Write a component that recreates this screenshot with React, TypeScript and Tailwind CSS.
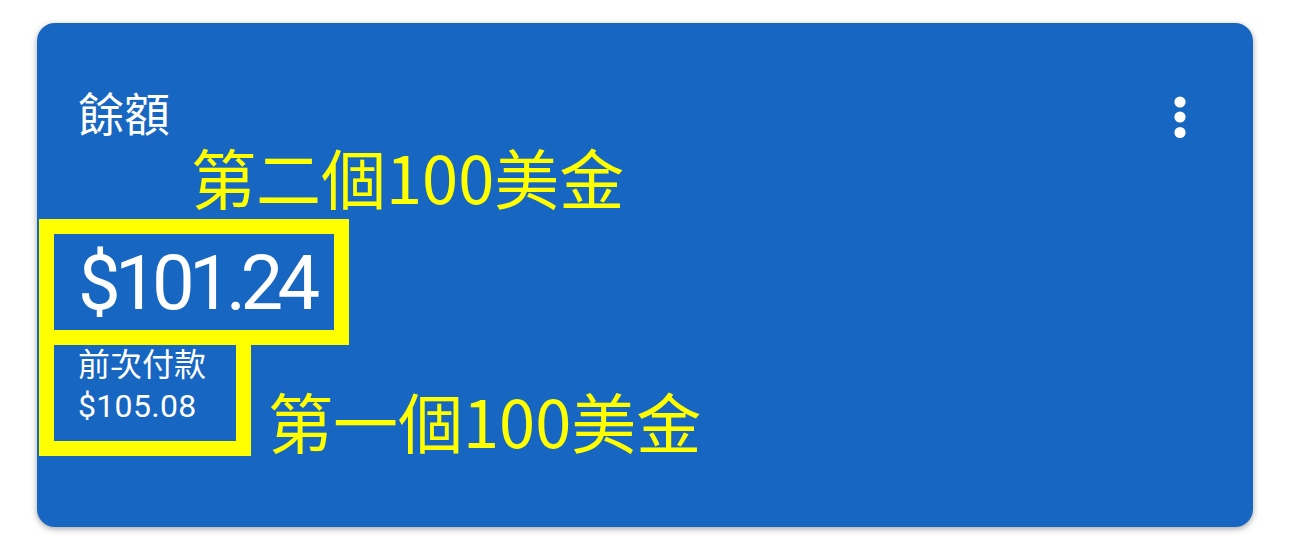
const Dots = () => (
  <svg width="12" height="43" viewBox="0 0 12 43" className="mt-[4px] shrink-0">
    <circle cx="6" cy="6" r="5.6" fill="#ffffff" />
    <circle cx="6" cy="21" r="5.6" fill="#ffffff" />
    <circle cx="6" cy="36.5" r="5.6" fill="#ffffff" />
  </svg>
);

const App = () => {
  return (
    <div className="min-h-screen bg-white px-[37px] pt-[23px] font-['Roboto','Noto_Sans_CJK_TC',sans-serif]">
      <div className="relative h-[504px] rounded-[18px] bg-[#1766c1] pl-[41px] pr-[67px] pt-[69px] text-white shadow-[0_2px_6px_rgba(0,0,0,0.35)]">
        <div className="flex items-start justify-between">
          <div className="text-[46px] leading-none">餘額</div>
          <Dots />
        </div>
        <div className="mt-[106px] text-[76px] leading-none tracking-[-0.075em]">$101.24</div>
        <div className="mt-[28px] text-[32px] leading-none">前次付款</div>
        <div className="mt-[9px] text-[32px] leading-none tracking-[0.01em]">$105.08</div>

        {/* annotations */}
        <div className="absolute left-[2px] top-[196px] h-[126px] w-[310px] border-[15px] border-[#ffff00]" />
        <div className="absolute left-[2px] top-[307px] h-[126px] w-[212px] border-[15px] border-t-0 border-[#ffff00]" />
        <div className="absolute left-[154px] top-[121px] font-['Noto_Sans_CJK_TC',sans-serif] text-[65px] leading-none text-[#ffff00]">
          第二個100美金
        </div>
        <div className="absolute left-[231px] top-[365px] font-['Noto_Sans_CJK_TC',sans-serif] text-[65px] leading-none text-[#ffff00]">
          第一個100美金
        </div>
      </div>
    </div>
  );
};

export default App;
